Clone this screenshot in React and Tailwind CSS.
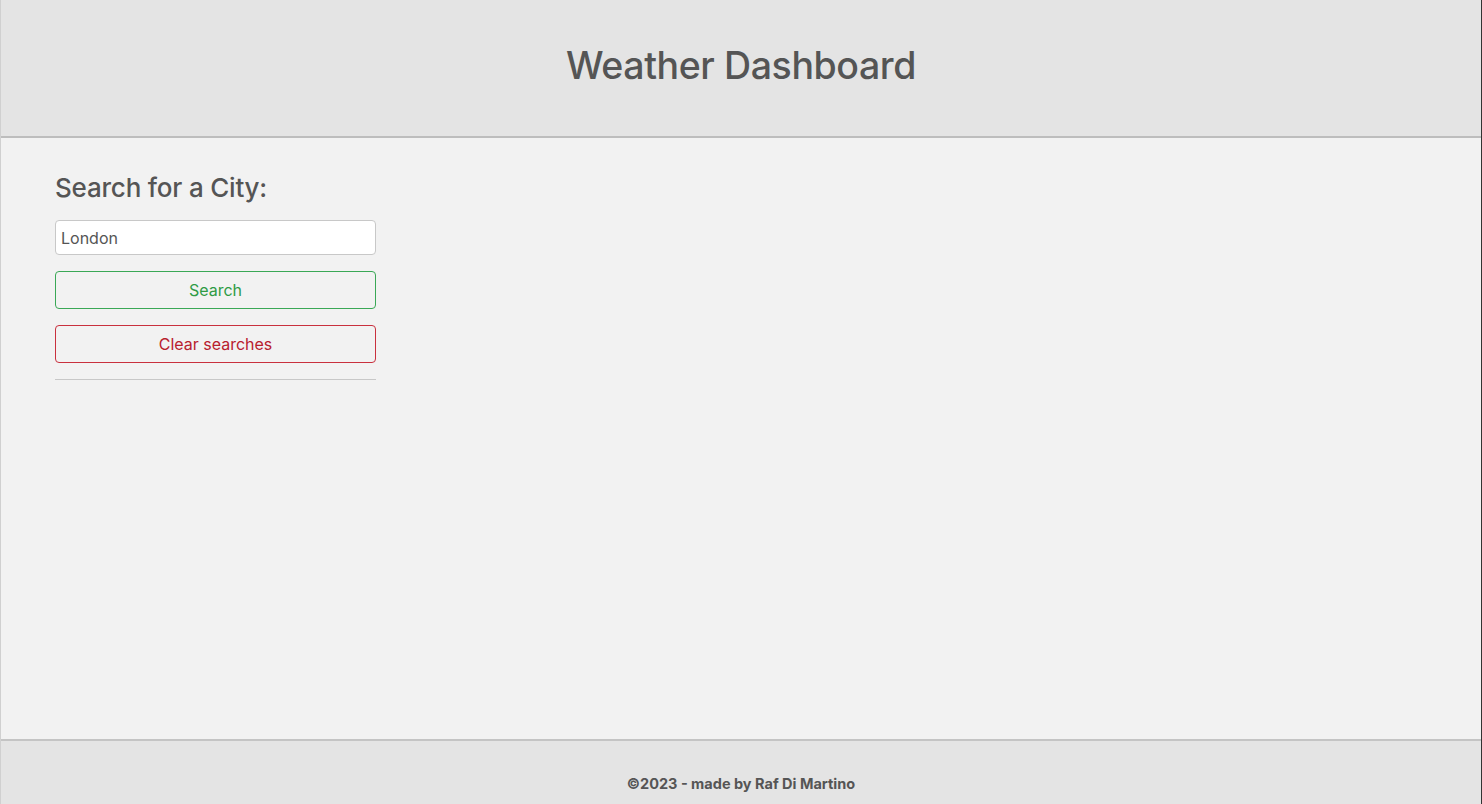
import React, { useState } from 'react';

const App = () => {
    const [city, setCity] = useState('London');

    return (
        <div className="min-h-screen h-[804px] flex flex-col bg-[#f2f2f2] text-[#555] border-l border-l-[#d0d0d0] border-r border-r-[#333]" style={{ fontFamily: 'Inter, "Noto Sans", sans-serif' }}>
            <header className="h-[138px] shrink-0 bg-[#e4e4e4] border-b-2 border-[#bdbdbd] flex items-center justify-center">
                <h1 className="text-[37.5px] font-medium tracking-[-0.4px] leading-none -mt-[5px]">Weather Dashboard</h1>
            </header>

            <main className="flex-1 px-[54px] pt-[37px]">
                <div className="w-[321px] flex flex-col">
                    <h2 className="text-[26px] font-medium leading-none tracking-[-0.2px]">Search for a City:</h2>
                    <input
                        value={city}
                        onChange={e => setCity(e.target.value)}
                        className="mt-[19px] h-[35px] bg-white border border-[#c8c8c8] rounded px-[5px] text-[16px] text-[#555] outline-none"
                    />
                    <button className="mt-[16px] h-[38px] border border-[#3aa856] rounded text-[16px] text-[#2f9b45]">
                        Search
                    </button>
                    <button className="mt-[16px] h-[38px] border border-[#c9303e] rounded text-[16px] text-[#b8202e]">
                        Clear searches
                    </button>
                    <hr className="mt-[16px] border-t border-[#c8c8c8]" />
                </div>
            </main>

            <footer className="h-[65px] shrink-0 bg-[#e4e4e4] border-t-2 border-[#c4c4c4] flex items-end justify-center pb-[9px]">
                <p className="text-[14.5px] font-bold">©2023 - made by Raf Di Martino</p>
            </footer>
        </div>
    );
};

export default App;
